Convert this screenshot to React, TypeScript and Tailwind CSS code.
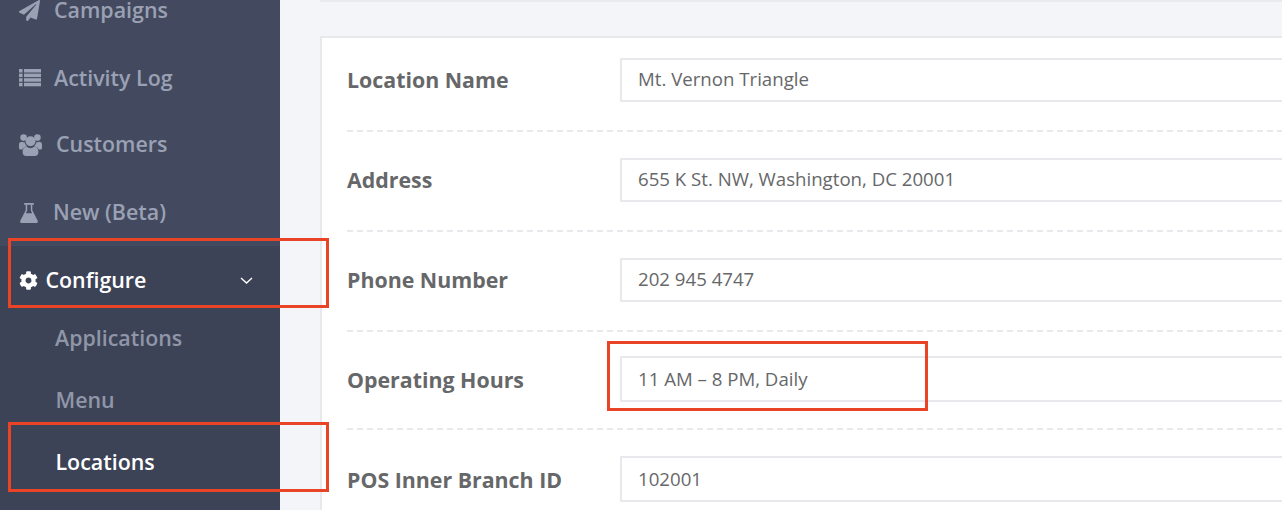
import { FaPaperPlane, FaCog } from "react-icons/fa";

const dash = "border-b-2 border-dashed border-[#e8e9ec]";
const rows = [
  { label: "Location Name", value: "Mt. Vernon Triangle", cls: `h-[94px] pt-[20px] ${dash}`, inner: "h-[44px]", labelCls: "pt-[1px]", valueCls: "pb-[2px]" },
  { label: "Address", value: "655 K St. NW, Washington, DC 20001", cls: `h-[100px] pt-[26px] ${dash}`, inner: "h-[44px]", labelCls: "pt-[1px]", valueCls: "pb-[2px]" },
  { label: "Phone Number", value: "202 945 4747", cls: `h-[100px] pt-[26px] ${dash}`, inner: "h-[44px]", labelCls: "pt-[1px]", valueCls: "pb-[2px]" },
  { label: "Operating Hours", value: "11 AM – 8 PM, Daily", cls: `h-[98px] pt-[24px] ${dash}`, inner: "h-[46px]", labelCls: "pt-[3px]", valueCls: "pb-[0px]" },
  { label: "POS Inner Branch ID", value: "102001", cls: "h-[100px] pt-[26px]", inner: "h-[46px]", labelCls: "pt-[3px]", valueCls: "pb-[0px]" },
];

function Mark({ className }: { className: string }) {
  return <div className={`absolute border-[3px] border-[#ea4426] ${className}`} />;
}

function ListIcon() {
  return (
    <svg viewBox="0 0 22 18" className="mr-[13px] h-[18px] w-[22px] shrink-0" fill="currentColor">
      {[0, 4.6, 9.2, 13.8].map((y) => (
        <g key={y}>
          <rect x="0" y={y} width="3.6" height="3.5" />
          <rect x="5" y={y} width="17" height="3.5" />
        </g>
      ))}
    </svg>
  );
}

function UsersIcon() {
  return (
    <svg viewBox="0 0 23 22" className="mr-[14px] h-[22px] w-[23px] shrink-0" fill="currentColor">
      <circle cx="4.6" cy="3.6" r="3.3" />
      <circle cx="18.4" cy="3.6" r="3.3" />
      <circle cx="11.5" cy="7.2" r="5" />
      <path d="M0 10.5C0 8.5 1.5 7.5 3 7.7C3.8 8.3 4.6 8.4 5.6 8.3C6 10 6.8 11.2 8 12.2C5.6 12.6 3.9 14 3.4 15.6H1.6C.6 15.6 0 14.9 0 13.8Z" />
      <path d="M23 10.5C23 8.5 21.5 7.5 20 7.7C19.2 8.3 18.4 8.4 17.4 8.3C17 10 16.2 11.2 15 12.2C17.4 12.6 19.1 14 19.6 15.6H21.4C22.4 15.6 23 14.9 23 13.8Z" />
      <path d="M3.6 18C3.6 14.8 5.2 12.8 7.6 12.6C9 13.8 10.2 14.2 11.5 14.2C12.8 14.2 14 13.8 15.4 12.6C17.8 12.8 19.4 14.8 19.4 18C19.4 20.5 18 22 15.8 22H7.2C5 22 3.6 20.5 3.6 18Z" />
    </svg>
  );
}

function FlaskIcon() {
  return (
    <svg viewBox="0 0 18 20" className="mr-[15px] h-[20px] w-[18px] shrink-0" fill="currentColor">
      <rect x="4.2" y="0" width="9.6" height="1.8" />
      <path d="M5.7 1.5H7.2V7.6L5.9 10.2H12.1L10.8 7.6V1.5H12.3V7.2L17.6 17.4C18.3 18.8 17.5 20 16 20H2C.5 20 -.3 18.8 .4 17.4L5.7 7.2Z" />
    </svg>
  );
}

export default function App() {
  return (
    <div className="relative flex h-[510px] w-[1282px] overflow-hidden bg-[#f4f5f9] font-['Open_Sans',sans-serif]">
      <aside className="flex w-[280px] shrink-0 flex-col bg-[#3c4356] text-[21.4px] font-semibold text-[#9ba1b4]">
        <div className="-mt-[24px] flex flex-col bg-[#434a5f]">
          <div className="flex h-[68px] items-center pl-[19px]">
            <FaPaperPlane className="mr-[14px] text-[21px]" />
            <span>Campaigns</span>
          </div>
          <div className="flex h-[68px] items-center pl-[19px]">
            <ListIcon />
            <span>Activity Log</span>
          </div>
          <div className="flex h-[65px] items-center pl-[19px]">
            <UsersIcon />
            <span>Customers</span>
          </div>
          <div className="flex h-[69px] items-center pl-[20px] pt-[2px]">
            <FlaskIcon />
            <span>New (Beta)</span>
          </div>
        </div>
        <div className="flex h-[61px] items-center pl-[19px] pr-[27px] pt-[7px] text-white">
          <FaCog className="mr-[7.5px] text-[19px]" />
          <span className="flex-1">Configure</span>
          <svg viewBox="0 0 13 7" className="h-[7px] w-[13px]" fill="none" stroke="currentColor" strokeWidth="1.4">
            <polyline points="1,1 6.5,6 12,1" />
          </svg>
        </div>
        <div className="flex h-[62px] items-center pl-[55px] text-[#9096a8]">Applications</div>
        <div className="flex h-[62px] items-center pl-[55.5px] text-[#9096a8]">Menu</div>
        <div className="flex h-[62px] items-center pl-[55.5px] text-white">Locations</div>
      </aside>

      <main className="flex min-w-0 flex-1 flex-col pl-[40px]">
        <div className="h-[2px] w-full shrink-0 bg-[#e9eaee]" />
        <section className="mt-[34px] flex w-[1000px] shrink-0 flex-col border-2 border-[#e8e9ec] bg-white px-[25px]">
          {rows.map((row) => (
            <div key={row.label} className={`shrink-0 ${row.cls}`}>
              <div className={`flex items-center ${row.inner}`}>
                <label className={`w-[273px] shrink-0 text-[21.35px] font-bold text-[#666769] ${row.labelCls}`}>{row.label}</label>
                <div className={`flex h-full flex-1 items-center border-2 border-[#e8e9ec] bg-white pl-[16px] text-[18.65px] text-[#666769] ${row.valueCls}`}>
                  {row.value}
                </div>
              </div>
            </div>
          ))}
        </section>
      </main>

      <Mark className="left-[8px] top-[238px] h-[70px] w-[321px]" />
      <Mark className="left-[8px] top-[422px] h-[70px] w-[321px]" />
      <Mark className="left-[607px] top-[341px] h-[70px] w-[321px]" />
    </div>
  );
}
